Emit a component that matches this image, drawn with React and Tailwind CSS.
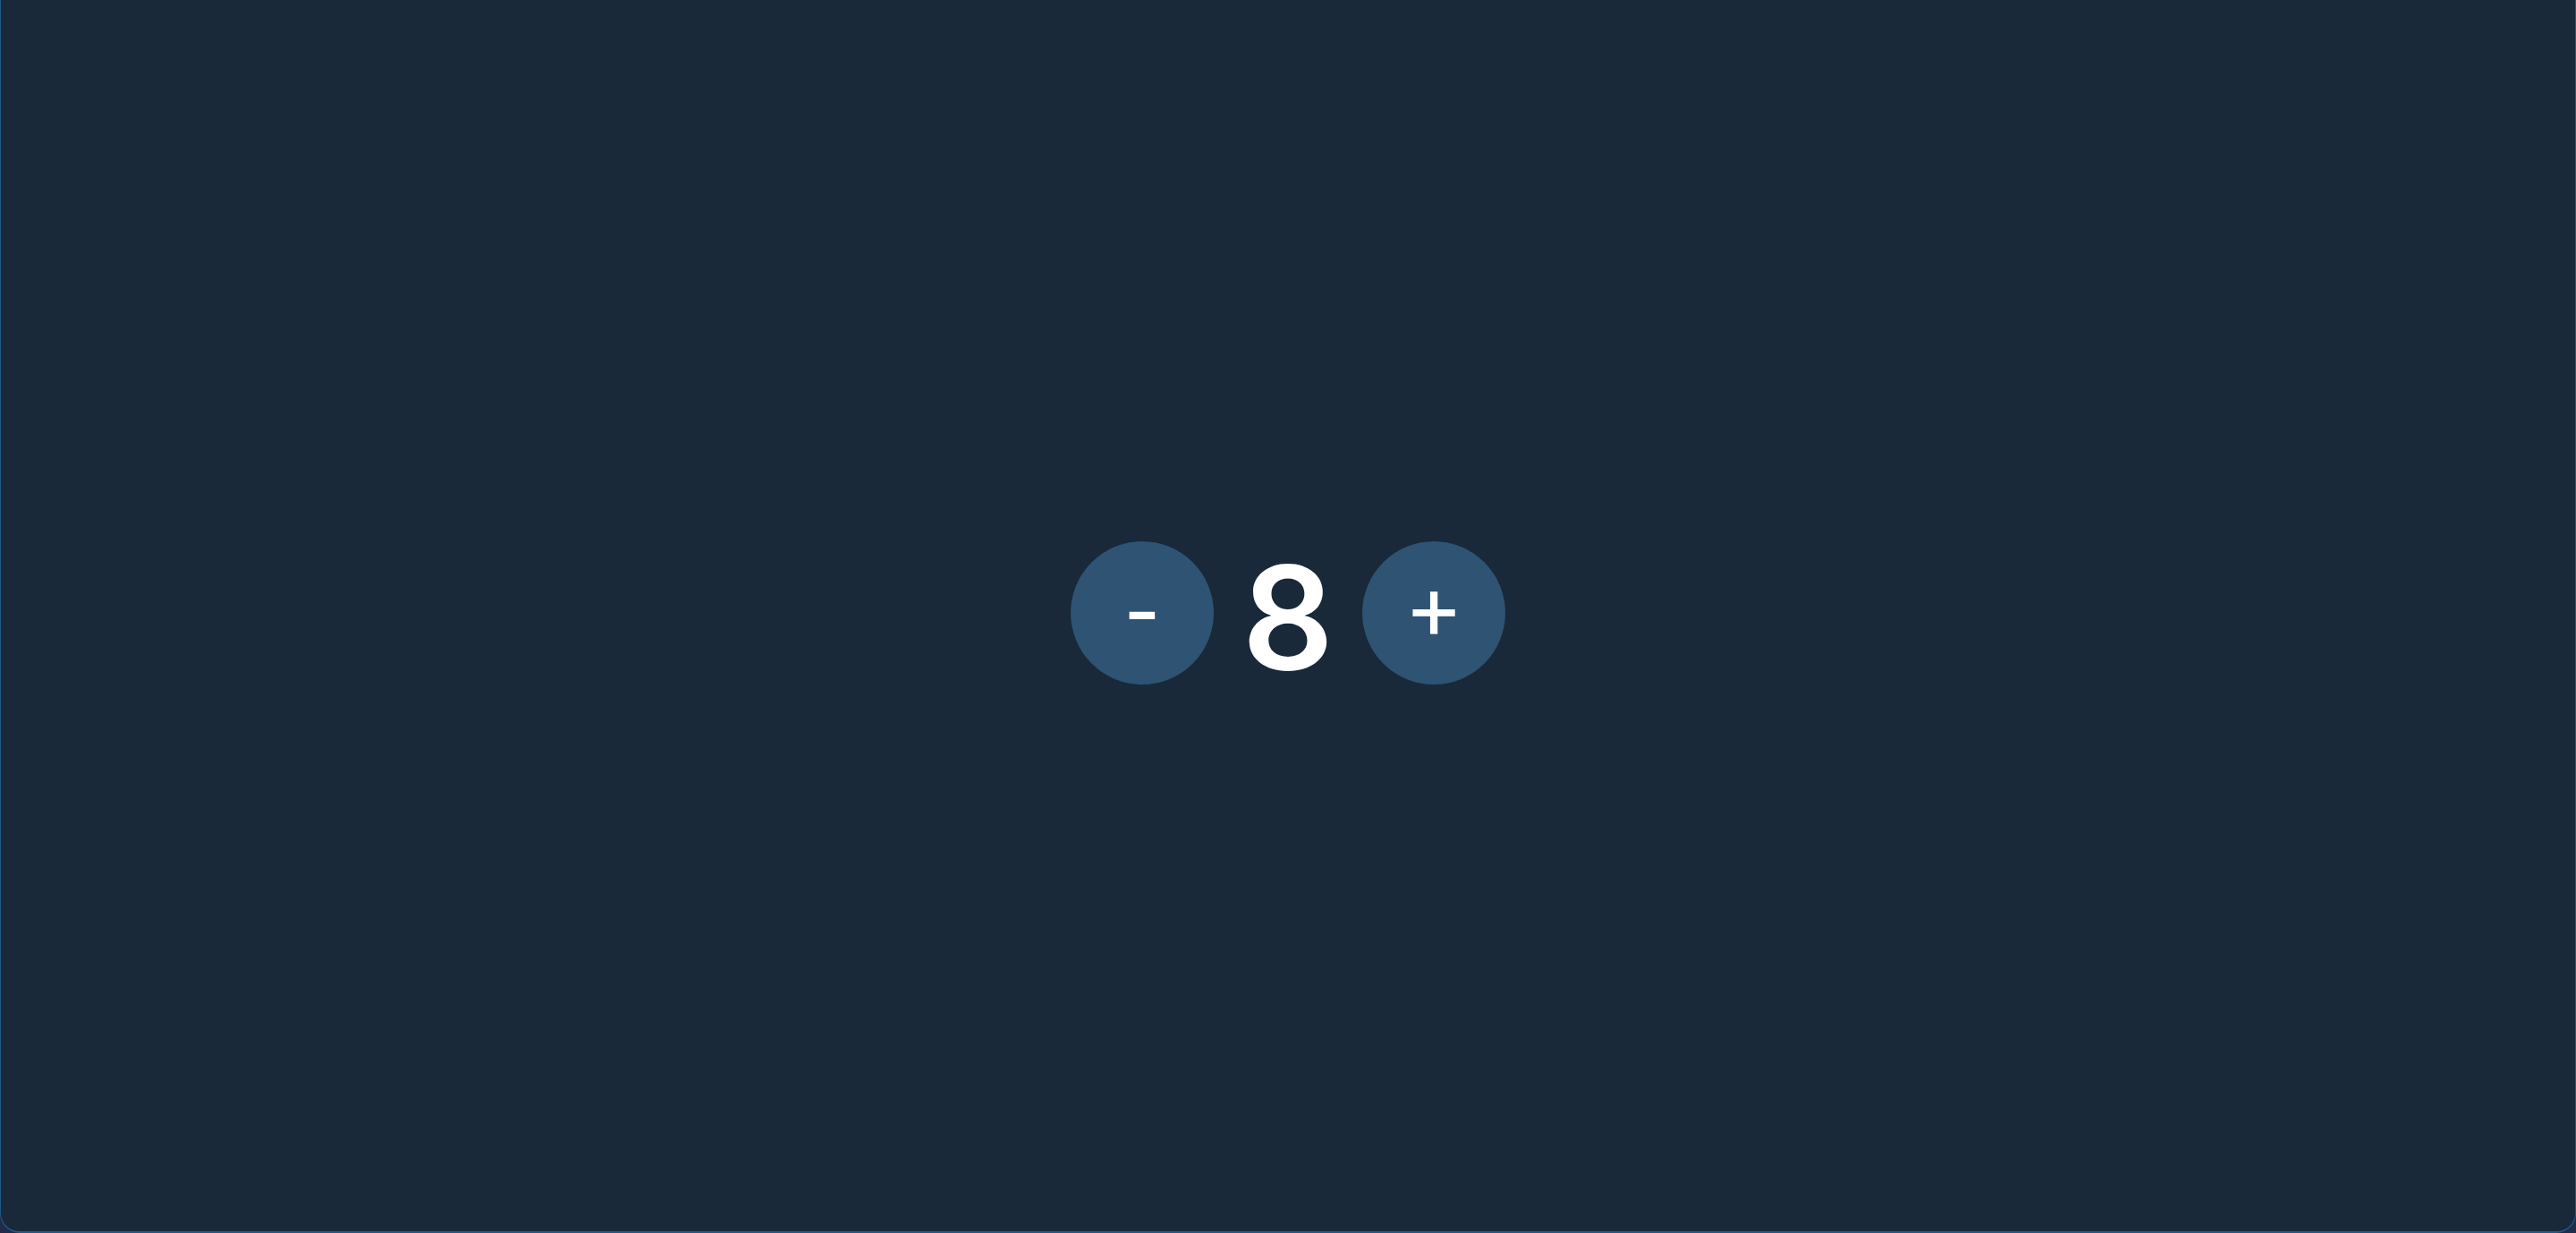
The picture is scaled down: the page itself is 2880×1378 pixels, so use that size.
import { useState } from 'react'

const CircleButton = ({ children, onClick }) => (
  <button
    onClick={onClick}
    className="w-[160px] h-[160px] rounded-full bg-[#2e5373] text-white leading-none flex items-center justify-center"
    style={{ fontFamily: 'Inter, "Liberation Sans", sans-serif' }}
  >
    {children}
  </button>
)

const App = () => {
  const [count, setCount] = useState(8)

  return (
    <div className="w-full h-screen bg-[#1f2b47]">
      <div className="w-full h-full bg-[#19293a] rounded-b-[22px] border-b-2 border-x border-[#1f5a8a] flex items-center justify-center">
        <div className="flex items-center gap-[32px] -translate-y-[3px]">
          <CircleButton onClick={() => setCount(count - 1)}>
            <span className="text-[88px] font-medium -translate-y-[2px]">-</span>
          </CircleButton>
          <span
            className="text-white text-[160px] font-semibold leading-none translate-y-[5px]"
            style={{ fontFamily: 'Inter, "Liberation Sans", sans-serif' }}
          >
            {count}
          </span>
          <CircleButton onClick={() => setCount(count + 1)}>
            <span className="text-[100px] font-normal -translate-y-[8px]">+</span>
          </CircleButton>
        </div>
      </div>
    </div>
  )
}

export default App
